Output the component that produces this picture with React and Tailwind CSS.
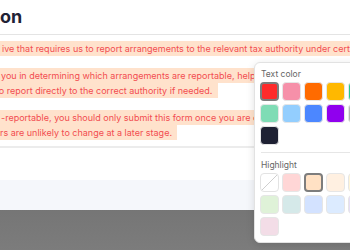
import React from "react";

const textColors = [
  ["#ff2b2b", true], ["#f690a9"], ["#ff6b00"], ["#ffb800"], ["#23c98f"], ["#adb5bd"],
  ["#7fdcb5"], ["#93cefe"], ["#4c87ff"], ["#9000ee"], ["#b3b3b3"], ["#6c757d"],
  ["#1e2133"],
];

const highlights = [
  ["none"], ["#ffd6d6"], ["#ffe1c4", true], ["#fff0e1"], ["#fff4d6"], ["#fffad6"],
  ["#dff2d8"], ["#d5e9e9"], ["#d3e2ff"], ["#dcebff"], ["#e6def6"], ["#eeeeee"],
  ["#f3dde7"],
];

function Swatch({ color, selected }) {
  if (color === "none") {
    return (
      <div className="w-[19px] h-[19px] rounded-[4px] border border-[#e3e3e3] bg-white overflow-hidden">
        <svg width="17" height="17" viewBox="0 0 17 17">
          <line x1="0" y1="17" x2="17" y2="0" stroke="#cfcfcf" strokeWidth="1" />
        </svg>
      </div>
    );
  }
  return (
    <div
      className={
        "w-[19px] h-[19px] rounded-[4px] " +
        (selected ? "border-2 border-[#7d7d7d]" : "border border-[#e6e6e6]")
      }
      style={{ backgroundColor: color }}
    />
  );
}

function Line({ children, cls = "" }) {
  return (
    <div className="h-[15px] whitespace-nowrap">
      <span className={"inline-block h-[15px] leading-[15px] bg-[#ffe2cc] text-[#f24d50] " + cls}>
        {children}
      </span>
    </div>
  );
}

export default function App() {
  return (
    <div className="w-[350px] h-[250px] overflow-hidden relative bg-linear-to-b from-[#555555] to-[#7c7c7c] font-['Inter',sans-serif]">
      <div className="bg-white">
        <div className="h-[35px] border-b border-[#e4e4e4] flex items-center">
          <h1 className="text-[18px] font-bold text-[#1f2235] leading-none">on</h1>
        </div>
        <div className="pt-[6px] text-[9px]">
          <Line cls="pl-[2px] pr-[20px]">ive that requires us to report arrangements to the relevant tax authority under certain circumstances.</Line>
          <div className="mt-[12px]">
            <Line cls="pl-[1px] pr-[20px]">you in determining which arrangements are reportable, helping us</Line>
            <Line cls="-ml-[4px] pl-[0px] pr-[6px]">to report directly to the correct authority if needed.</Line>
          </div>
          <div className="mt-[12px]">
            <Line cls="pl-[1px] pr-[20px]">-reportable, you should only submit this form once you are confident that the</Line>
            <Line cls="pr-[5px]">rs are unlikely to change at a later stage.</Line>
          </div>
        </div>
        <div className="h-[2px] bg-[#ececec] mt-[6px]" />
        <div className="h-[32px] bg-white" />
        <div className="h-[30px] bg-[#f5f7fb]" />
      </div>

      <div className="absolute left-[254px] top-[62px] w-[170px] h-[181px] bg-white border border-[#e2e2e2] rounded-[6px] shadow-[0_2px_8px_rgba(0,0,0,0.12)] pl-[5px] pt-[5px]">
        <div className="text-[8.5px] leading-[12px] text-[#666] pl-[1px]">Text color</div>
        <div className="mt-[2px] grid grid-cols-[repeat(6,19px)] gap-[3px]">
          {textColors.map(([c, s], i) => (
            <Swatch key={i} color={c} selected={s} />
          ))}
        </div>
        <div className="mt-[7px] ml-[1px] h-px bg-[#e6e6e6]" />
        <div className="mt-[6px] text-[8.5px] leading-[12px] text-[#666] pl-[1px]">Highlight</div>
        <div className="mt-[2px] grid grid-cols-[repeat(6,19px)] gap-[3px]">
          {highlights.map(([c, s], i) => (
            <Swatch key={i} color={c} selected={s} />
          ))}
        </div>
      </div>
    </div>
  );
}
